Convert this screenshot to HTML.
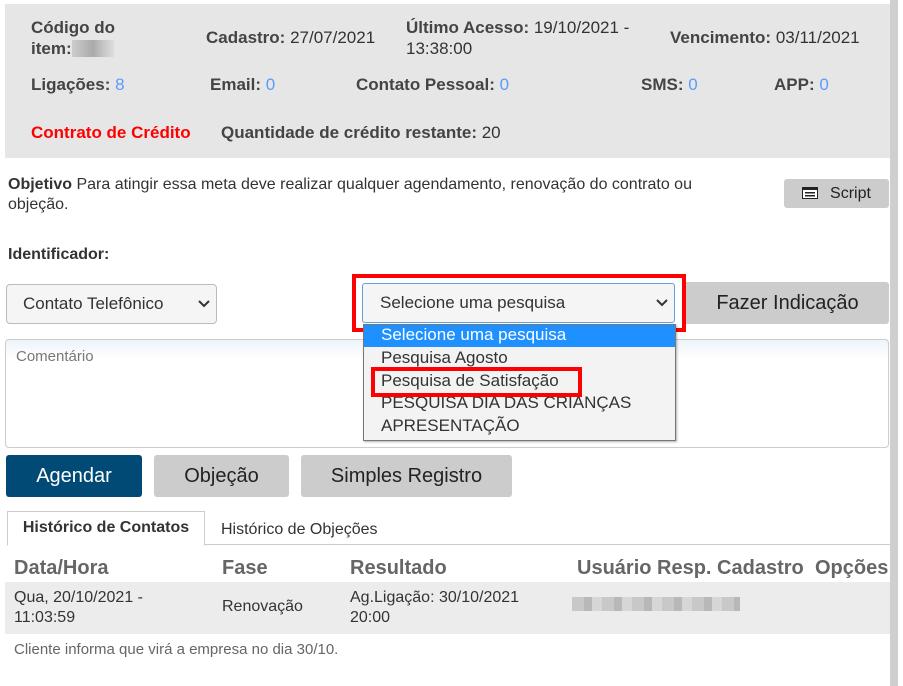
<!DOCTYPE html>
<html><head><meta charset="utf-8"><style>
body{margin:0;width:903px;height:686px;background:#fff;font-family:"Liberation Sans",Arial,sans-serif;color:#333;position:relative;overflow:hidden}
.a{position:absolute;white-space:nowrap}
b{font-weight:bold;color:#444}
.bl{color:#5b9bff}
.btn{position:absolute;background:#ccc;border-radius:3px;text-align:center;color:#222}
</style></head><body>
<div class="a" style="left:5px;top:4px;width:885px;height:154px;background:#e6e6e6"></div>
<div class="a" style="left:890px;top:0;width:8px;height:686px;background:#cfcfcf"></div>
<div class="a" style="left:31px;top:17px;font-size:17px;line-height:21px"><b>Código do<br>item:</b><span style="display:inline-block;width:42px;height:17px;background:linear-gradient(90deg,#ccc,#bbb,#aaa,#c6c6c6,#ddd);vertical-align:-3px"></span></div>
<div class="a" style="left:206px;top:28px;font-size:17px"><b>Cadastro:</b> 27/07/2021</div>
<div class="a" style="left:406px;top:17px;font-size:17px;line-height:21px"><b>Último Acesso:</b> 19/10/2021 -<br>13:38:00</div>
<div class="a" style="left:670px;top:28px;font-size:17px"><b>Vencimento:</b> 03/11/2021</div>
<div class="a" style="left:31px;top:75px;font-size:17px"><b>Ligações:</b> <span class="bl">8</span></div>
<div class="a" style="left:210px;top:75px;font-size:17px"><b>Email:</b> <span class="bl">0</span></div>
<div class="a" style="left:356px;top:75px;font-size:17px"><b>Contato Pessoal:</b> <span class="bl">0</span></div>
<div class="a" style="left:641px;top:75px;font-size:17px"><b>SMS:</b> <span class="bl">0</span></div>
<div class="a" style="left:774px;top:75px;font-size:17px"><b>APP:</b> <span class="bl">0</span></div>
<div class="a" style="left:31px;top:123px;font-size:17px;color:#f00;font-weight:bold">Contrato de Crédito</div>
<div class="a" style="left:221px;top:123px;font-size:17px"><b>Quantidade de crédito restante:</b> 20</div>
<div class="a" style="left:8px;top:175px;font-size:16px;line-height:20px;white-space:normal;width:720px"><b style="color:#333">Objetivo</b> Para atingir essa meta deve realizar qualquer agendamento, renovação do contrato ou objeção.</div>
<div class="btn" style="left:784px;top:179px;width:105px;height:29px;line-height:29px;font-size:16px"><svg width="16" height="12" style="vertical-align:-1px;margin-right:12px"><rect x="0.5" y="0.5" width="15" height="11" fill="#fff" stroke="#222"/><rect x="0" y="0" width="16" height="3" fill="#222"/><rect x="3" y="5" width="10" height="1.5" fill="#222"/><rect x="3" y="8" width="10" height="1.5" fill="#222"/></svg>Script</div>
<div class="a" style="left:8px;top:246px;font-size:16px;font-weight:bold;color:#333">Identificador:</div>
<div class="a" style="left:6px;top:284px;width:209px;height:38px;border:1px solid #bbb;border-radius:4px;background:#f5f5f5;font-size:17px;line-height:38px"><span style="margin-left:16px">Contato Telefônico</span><svg width="12" height="8" style="position:absolute;right:6px;top:15px"><path d="M1 1l5 5 5-5" stroke="#333" stroke-width="2" fill="none"/></svg></div>
<div class="btn" style="left:686px;top:282px;width:203px;height:42px;line-height:42px;font-size:20px;border-radius:0 3px 3px 0">Fazer Indicação</div>
<div class="a" style="left:352px;top:274px;width:326px;height:50px;border:4px solid #f00"></div>
<div class="a" style="left:362px;top:283px;width:311px;height:38px;border:1px solid #66a0d8;border-radius:3px;background:#f5f5f5;font-size:17px;line-height:38px"><span style="margin-left:17px">Selecione uma pesquisa</span><svg width="12" height="8" style="position:absolute;right:6px;top:15px"><path d="M1 1l5 5 5-5" stroke="#333" stroke-width="2" fill="none"/></svg></div>
<div class="a" style="left:5px;top:339px;width:882px;height:107px;border:1px solid #ccc;border-radius:4px;background:linear-gradient(#eef4fb,#fff 20px)"><span style="position:absolute;left:10px;top:8px;font-size:15px;color:#777">Comentário</span></div>
<div class="a" style="left:363px;top:324px;width:311px;height:115px;border:1px solid #777;background:#f3f3f3;font-size:17px;line-height:22.5px;box-shadow:1px 1px 2px rgba(0,0,0,.3)">
<div style="background:#1e90ff;color:#fff;padding-left:17px;height:22px;line-height:20px;overflow:hidden">Selecione uma pesquisa</div>
<div style="padding-left:17px">Pesquisa Agosto</div>
<div style="padding-left:17px">Pesquisa de Satisfação</div>
<div style="padding-left:17px">PESQUISA DIA DAS CRIANÇAS</div>
<div style="padding-left:17px">APRESENTAÇÃO</div></div>
<div class="a" style="left:371px;top:367px;width:203px;height:22px;border:4px solid #f00"></div>
<div class="btn" style="left:6px;top:455px;width:136px;height:42px;line-height:42px;font-size:20px;background:#004a75;color:#fff">Agendar</div>
<div class="btn" style="left:154px;top:455px;width:135px;height:42px;line-height:42px;font-size:20px">Objeção</div>
<div class="btn" style="left:301px;top:455px;width:211px;height:42px;line-height:42px;font-size:20px">Simples Registro</div>
<div class="a" style="left:8px;top:544px;width:882px;height:1px;background:#ccc"></div>
<div class="a" style="left:7px;top:511px;width:196px;height:33px;border:1px solid #ccc;border-bottom:1px solid #fff;background:#fff;font-size:16px;font-weight:bold;line-height:32px;text-align:center;color:#333">Histórico de Contatos</div>
<div class="a" style="left:221px;top:521px;font-size:16px;color:#333">Histórico de Objeções</div>
<div class="a" style="left:14px;top:557px;font-size:20px;font-weight:bold;color:#666">Data/Hora</div>
<div class="a" style="left:222px;top:557px;font-size:20px;font-weight:bold;color:#666">Fase</div>
<div class="a" style="left:350px;top:557px;font-size:20px;font-weight:bold;color:#666">Resultado</div>
<div class="a" style="left:577px;top:557px;font-size:20px;font-weight:bold;color:#666">Usuário Resp. Cadastro</div>
<div class="a" style="left:815px;top:557px;font-size:20px;font-weight:bold;color:#666">Opções</div>
<div class="a" style="left:5px;top:582px;width:885px;height:52px;background:#ececec"></div>
<div class="a" style="left:14px;top:588px;font-size:16px;line-height:20px">Qua, 20/10/2021 -<br>11:03:59</div>
<div class="a" style="left:222px;top:598px;font-size:16px">Renovação</div>
<div class="a" style="left:350px;top:588px;font-size:16px;line-height:20px">Ag.Ligação: 30/10/2021<br>20:00</div>
<div class="a" style="left:572px;top:597px;width:168px;height:14px;background:repeating-linear-gradient(90deg,#c8c8c8 0 12px,#b8b8b8 12px 20px,#d6d6d6 20px 30px)"></div>
<div class="a" style="left:14px;top:641px;font-size:15px;color:#666">Cliente informa que virá a empresa no dia 30/10.</div>
</body></html>
